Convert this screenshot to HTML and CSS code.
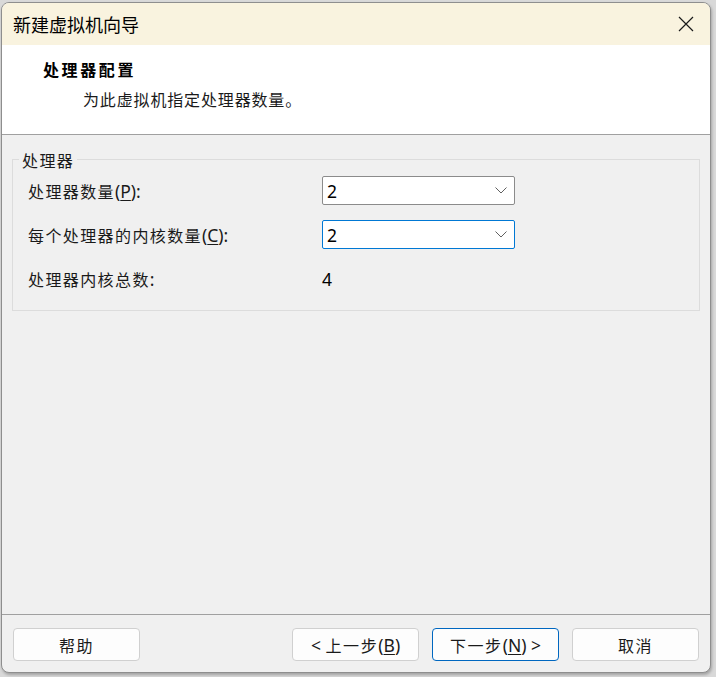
FILE: index.html
```
<!DOCTYPE html>
<html lang="zh-CN">
<head>
<meta charset="utf-8">
<title>新建虚拟机向导</title>
<link rel="stylesheet" href="styles.css">
</head>
<body>
<div class="window">
  <div class="titlebar">
    <span class="title">新建虚拟机向导</span>
    <span class="close" aria-label="关闭">
      <svg width="16" height="16" viewBox="0 0 16 16"><path d="M1 1 L15 15 M15 1 L1 15" stroke="#1a1a1a" stroke-width="1.2" fill="none"/></svg>
    </span>
  </div>
  <div class="header">
    <div class="heading">处理器配置</div>
    <div class="subtitle">为此虚拟机指定处理器数量。</div>
  </div>
  <div class="content">
    <div class="group">
      <span class="legend">处理器</span>
      <div class="rows">
        <div class="label"><span class="cjk">处理器数量</span>(<u>P</u>):</div>
        <div class="select"><span class="val">2</span><svg class="chev" width="12" height="7" viewBox="0 0 12 7"><path d="M0.5 0.5 L6 6 L11.5 0.5" stroke="#606060" stroke-width="1" fill="none"/></svg></div>
        <div class="label"><span class="cjk">每个处理器的内核数量</span>(<u>C</u>):</div>
        <div class="select focus"><span class="val">2</span><svg class="chev" width="12" height="7" viewBox="0 0 12 7"><path d="M0.5 0.5 L6 6 L11.5 0.5" stroke="#606060" stroke-width="1" fill="none"/></svg></div>
        <div class="label"><span class="cjk">处理器内核总数</span>:</div>
        <div class="value">4</div>
      </div>
    </div>
  </div>
  <div class="footer">
    <button class="btn"><span class="btxt"><span class="cjk">帮助</span></span></button>
    <div class="spacer"></div>
    <button class="btn"><span class="btxt">&lt; <span class="cjk">上一步</span>(<u>B</u>)</span></button>
    <button class="btn primary"><span class="btxt"><span class="cjk">下一步</span>(<u>N</u>) &gt;</span></button>
    <button class="btn"><span class="btxt"><span class="cjk">取消</span></span></button>
  </div>
</div>
</body>
</html>
```
FILE: styles.css
```
html, body {
  margin: 0;
  padding: 0;
}
body {
  width: 716px;
  height: 677px;
  background: #d9d9d9;
  font-family: "Noto Sans", "Noto Sans CJK SC", sans-serif;
  color: #1a1a1a;
  overflow: hidden;
}
.window {
  margin: 2px 0 0 1px;
  width: 708px;
  height: 669px;
  border: 1px solid #8e8e8e;
  border-radius: 8px;
  overflow: hidden;
  background: #f0f0f0;
  display: flex;
  flex-direction: column;
  box-shadow: 1px 2px 3px rgba(0,0,0,0.25);
}
.titlebar {
  height: 42px;
  flex: none;
  background: #f9f3df;
  display: flex;
  align-items: center;
  justify-content: space-between;
  padding: 0 14px 0 11px;
}
.title {
  font-family: "Noto Sans CJK SC", sans-serif;
  font-size: 18px;
  color: #000;
}
.close {
  display: flex;
  width: 16px;
  height: 16px;
  margin-right: 2px;
}
.header {
  flex: none;
  background: #fff;
  border-bottom: 1px solid #a0a0a0;
  box-sizing: border-box;
  height: 90px;
  padding: 13px 0 0 41px;
}
.heading {
  font-family: "Noto Sans CJK SC", sans-serif;
  font-weight: bold;
  font-size: 16px;
  letter-spacing: 2.6px;
  line-height: 22px;
  color: #000;
}
.subtitle {
  font-family: "Noto Sans CJK SC", sans-serif;
  font-size: 16px;
  letter-spacing: 0.85px;
  line-height: 22px;
  margin: 8px 0 0 40px;
  color: #1a1a1a;
}
.content {
  flex: 1;
  padding: 24px 10px 0 10px;
}
.group {
  position: relative;
  border: 1px solid #dcdcdc;
  padding: 16px 15px 17px 15px;
}
.legend {
  position: absolute;
  top: -10px;
  left: 6px;
  padding: 0 3px 0 3px;
  background: #f0f0f0;
  font-family: "Noto Sans CJK SC", sans-serif;
  font-size: 16px;
  letter-spacing: 1.4px;
  line-height: 20px;
}
.rows {
  display: grid;
  grid-template-columns: 294px 193px;
  grid-auto-rows: 29px;
  row-gap: 15px;
  align-items: center;
}
.label {
  font-size: 17.5px;
  line-height: 20px;
  color: #1a1a1a;
}
.cjk {
  font-family: "Noto Sans CJK SC", sans-serif;
  font-size: 16px;
  letter-spacing: 1.4px;
}
u {
  text-decoration-thickness: 1px;
  text-underline-offset: 2px;
}
.select {
  box-sizing: border-box;
  height: 29px;
  background: #fff;
  border: 1px solid #8b8b8b;
  border-radius: 2px;
  display: flex;
  align-items: center;
  justify-content: space-between;
  padding: 0 7px 0 4px;
}
.select.focus {
  border-color: #0078d4;
}
.val, .value {
  font-size: 17.5px;
  color: #000;
}
.chev {
  display: block;
}
.footer {
  flex: none;
  border-top: 1px solid #a0a0a0;
  padding: 13px 11px 11px 11px;
  display: flex;
  gap: 13px;
}
.spacer {
  flex: 1;
}
.btn {
  width: 127px;
  height: 33px;
  box-sizing: border-box;
  background: #fdfdfd;
  border: 1px solid #d0d0d0;
  border-radius: 4px;
  font-family: "Noto Sans", "Noto Sans CJK SC", sans-serif;
  font-size: 17.5px;
  color: #1a1a1a;
  padding: 0;
  display: flex;
  align-items: center;
  justify-content: center;
}
.btxt {
  white-space: pre;
  line-height: 20px;
}
.btn .cjk {
  letter-spacing: 1.6px;
}
.btn.primary {
  border-color: #0067c0;
}
```
